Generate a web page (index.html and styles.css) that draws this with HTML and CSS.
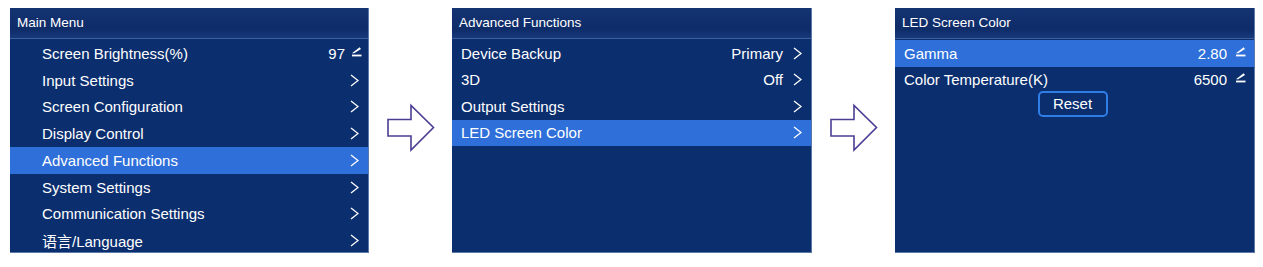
FILE: index.html
```html
<!DOCTYPE html>
<html>
<head>
<meta charset="utf-8">
<link rel="stylesheet" href="styles.css">
</head>
<body>
<div class="stage">
  <div class="panel">
    <div class="head">Main Menu</div>
    <div class="rows rows-main">
      <div class="row"><span class="label">Screen Brightness(%)</span><span class="val">97</span><svg class="edit" viewBox="0 0 11 11"><path d="M1 7.2 L8.6 1.2 L10 3 L3.2 7.2 Z" fill="#fff"/><rect x="1" y="8.6" width="9.5" height="1.8" fill="#fff"/></svg></div>
      <div class="row"><span class="label">Input Settings</span><svg class="chev" viewBox="0 0 9 13"><path d="M1 1 L8 6.5 L1 12" fill="none" stroke="#fff" stroke-width="1.3"/></svg></div>
      <div class="row"><span class="label">Screen Configuration</span><svg class="chev" viewBox="0 0 9 13"><path d="M1 1 L8 6.5 L1 12" fill="none" stroke="#fff" stroke-width="1.3"/></svg></div>
      <div class="row"><span class="label">Display Control</span><svg class="chev" viewBox="0 0 9 13"><path d="M1 1 L8 6.5 L1 12" fill="none" stroke="#fff" stroke-width="1.3"/></svg></div>
      <div class="row sel"><span class="label">Advanced Functions</span><svg class="chev" viewBox="0 0 9 13"><path d="M1 1 L8 6.5 L1 12" fill="none" stroke="#fff" stroke-width="1.3"/></svg></div>
      <div class="row"><span class="label">System Settings</span><svg class="chev" viewBox="0 0 9 13"><path d="M1 1 L8 6.5 L1 12" fill="none" stroke="#fff" stroke-width="1.3"/></svg></div>
      <div class="row"><span class="label">Communication Settings</span><svg class="chev" viewBox="0 0 9 13"><path d="M1 1 L8 6.5 L1 12" fill="none" stroke="#fff" stroke-width="1.3"/></svg></div>
      <div class="row"><span class="label">语言/Language</span><svg class="chev" viewBox="0 0 9 13"><path d="M1 1 L8 6.5 L1 12" fill="none" stroke="#fff" stroke-width="1.3"/></svg></div>
    </div>
  </div>

  <div class="arrow"><svg viewBox="0 0 48 48" width="48" height="48"><path d="M1 15.5 H24 V1.5 L46.5 23.5 L24 46 V32 H1 Z" fill="#fff" stroke="#4b3e92" stroke-width="1.6" stroke-linejoin="miter"/></svg></div>

  <div class="panel">
    <div class="head">Advanced Functions</div>
    <div class="rows rows-sub">
      <div class="row"><span class="label">Device Backup</span><span class="val">Primary</span><svg class="chev" viewBox="0 0 9 13"><path d="M1 1 L8 6.5 L1 12" fill="none" stroke="#fff" stroke-width="1.3"/></svg></div>
      <div class="row"><span class="label">3D</span><span class="val">Off</span><svg class="chev" viewBox="0 0 9 13"><path d="M1 1 L8 6.5 L1 12" fill="none" stroke="#fff" stroke-width="1.3"/></svg></div>
      <div class="row"><span class="label">Output Settings</span><svg class="chev" viewBox="0 0 9 13"><path d="M1 1 L8 6.5 L1 12" fill="none" stroke="#fff" stroke-width="1.3"/></svg></div>
      <div class="row sel"><span class="label">LED Screen Color</span><svg class="chev" viewBox="0 0 9 13"><path d="M1 1 L8 6.5 L1 12" fill="none" stroke="#fff" stroke-width="1.3"/></svg></div>
    </div>
  </div>

  <div class="arrow"><svg viewBox="0 0 48 48" width="48" height="48"><path d="M1 15.5 H24 V1.5 L46.5 23.5 L24 46 V32 H1 Z" fill="#fff" stroke="#4b3e92" stroke-width="1.6" stroke-linejoin="miter"/></svg></div>

  <div class="panel panel-color">
    <div class="head">LED Screen Color</div>
    <div class="rows rows-sub">
      <div class="row sel"><span class="label">Gamma</span><span class="val">2.80</span><svg class="edit" viewBox="0 0 11 11"><path d="M1 7.2 L8.6 1.2 L10 3 L3.2 7.2 Z" fill="#fff"/><rect x="1" y="8.6" width="9.5" height="1.8" fill="#fff"/></svg></div>
      <div class="row"><span class="label">Color Temperature(K)</span><span class="val">6500</span><svg class="edit" viewBox="0 0 11 11"><path d="M1 7.2 L8.6 1.2 L10 3 L3.2 7.2 Z" fill="#fff"/><rect x="1" y="8.6" width="9.5" height="1.8" fill="#fff"/></svg></div>
      <div class="btnrow"><span class="btn">Reset</span></div>
    </div>
  </div>
</div>
</body>
</html>
```

FILE: styles.css
```css
html, body {
  margin: 0;
  padding: 0;
  background: #ffffff;
}
body {
  font-family: "Liberation Sans", Arial, "Noto Sans CJK SC", sans-serif;
  color: #ffffff;
}
.stage {
  display: flex;
  align-items: flex-start;
  gap: 18px;
  padding: 8px 0 0 10px;
}
.panel {
  width: 360px;
  height: 245px;
  box-sizing: border-box;
  background: #0b2e6e;
  border-right: 1px solid #5a78a8;
  border-bottom: 1px solid #5a78a8;
  display: flex;
  flex-direction: column;
}
.panel:first-child {
  width: 359px;
}
.head {
  height: 31px;
  box-sizing: border-box;
  background: linear-gradient(#143372, #0e2c68 70%, #17387a);
  border-bottom: 1px solid #3d5f9c;
  font-size: 13.5px;
  line-height: 30px;
  padding-left: 7px;
}
.rows {
  display: flex;
  flex-direction: column;
  padding-top: 1px;
}
.row {
  height: 26.75px;
  display: flex;
  align-items: center;
  font-size: 15px;
  padding-right: 8px;
}
.rows-main .row {
  padding-left: 32px;
}
.rows-main .row:first-child {
  padding-right: 6px;
}
.rows-sub .row {
  height: 26.5px;
  padding-left: 9px;
}
.row.sel {
  background: #2e6fd9;
}
.label {
  flex: 1;
  white-space: nowrap;
}
.val {
  font-size: 15px;
}
.chev {
  width: 9px;
  height: 13px;
  margin-left: 10px;
  margin-right: 1px;
}
.edit {
  width: 11px;
  height: 11px;
  margin-left: 6px;
  margin-top: -4px;
}
.panel-color .edit {
  margin-left: 8px;
}
.arrow {
  width: 47px;
  height: 48px;
  margin-top: 96px;
}
.arrow svg {
  display: block;
  overflow: visible;
}
.btnrow {
  display: flex;
  justify-content: center;
  margin-top: -2px;
  padding-right: 4px;
}
.btn {
  width: 70px;
  height: 26px;
  box-sizing: border-box;
  border: 2px solid #2f7de6;
  border-radius: 5px;
  font-size: 15px;
  line-height: 22px;
  text-align: center;
}
```
